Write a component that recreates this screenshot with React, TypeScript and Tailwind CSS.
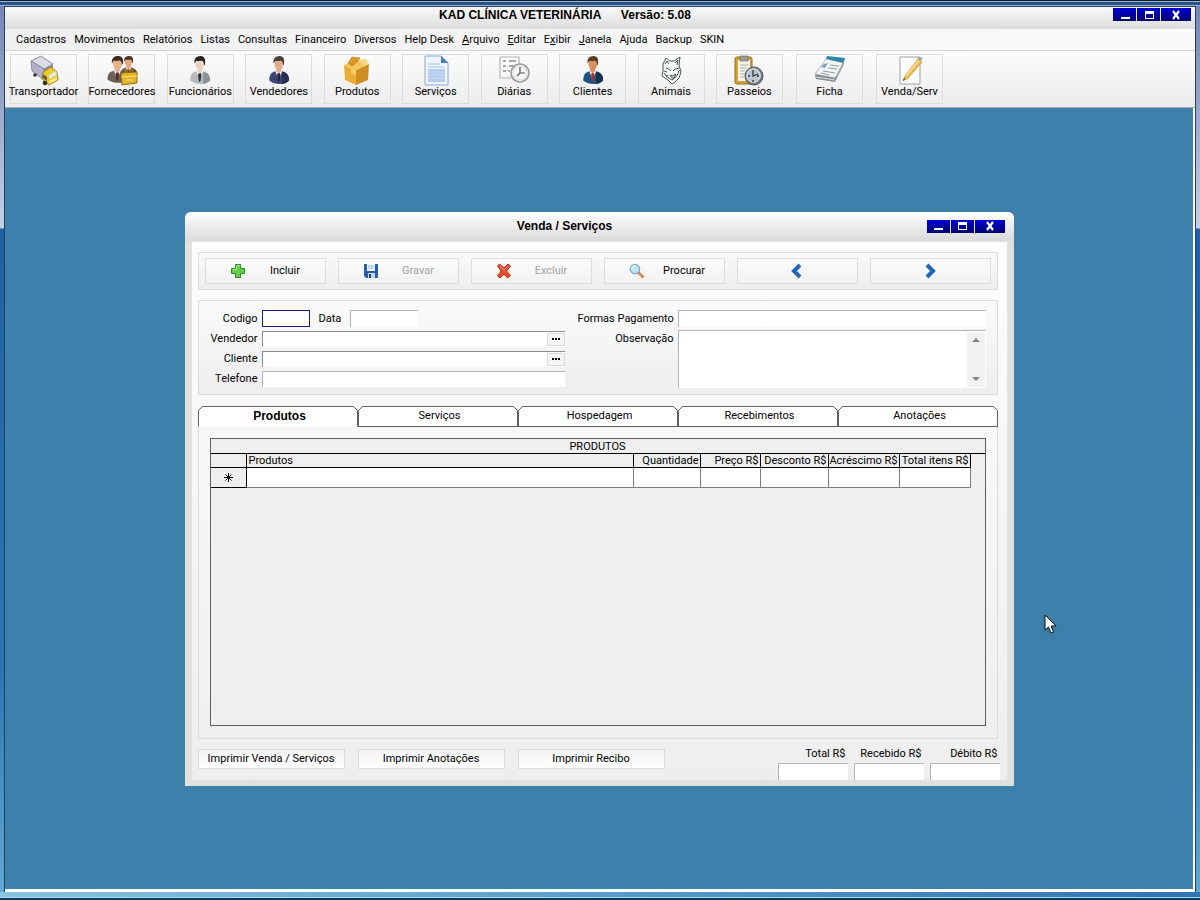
import type { ReactNode } from "react";

function Truck() {
  return (
    <svg viewBox="0 0 32 32" className="size-8">
      <path d="M3 6 13 1l12 8v11l-9 5L4 16z" fill="#8f8fa3" />
      <path d="M3 6 13 1l12 8-9 5z" fill="#dcdce8" stroke="#77778a" strokeWidth=".7" />
      <path d="M3 6 16 14v11L4 16z" fill="#b4b3cc" stroke="#77778a" strokeWidth=".7" />
      <path d="M15 17 23 12l6 5 1 8-9 5-7-6z" fill="#efc92c" stroke="#8b6d12" strokeWidth=".8" />
      <path d="m21 20 7-4 1 4-8 4z" fill="#d9ebf1" />
      <path d="m21 26 8-4v3l-8 4z" fill="#fbe878" />
      <circle cx="17" cy="28" r="2.3" fill="#333" />
      <circle cx="7" cy="20" r="1.8" fill="#333" />
      <path d="m15 19 4 3v4l-4-3z" fill="#5e5c49" />
    </svg>
  );
}

type PersonProps = { suit: string; dark: string; hair: string; skin: string; tie: string };

function PersonShape({ suit, dark, hair, skin, tie }: PersonProps) {
  return (
    <g>
      <path d="M5 26c0-7 3-9 8-10h6c6 1 9 4 9 10-4 5-17 5-23 0z" fill={suit} />
      <path d="M20 17c6 1 8 4 8 9-2 2-5 3-8 4z" fill={dark} />
      <path d="m12 16 4 10 4-10z" fill="#f5f5f5" />
      <path d="m15 18-1 2 1 8 2-2 1-6-1-2z" fill={tie} />
      <path d="M13 12h6v4l-3 3-3-3z" fill={skin} />
      <ellipse cx="16" cy="8.500" rx="5" ry="6.500" fill={skin} />
      <path d="M10 8c-1-5 2-8 7-8 5 0 6 4 5 9l-1 1c0-3-1-5-3-5-3 1-5 0-6 0z" fill={hair} />
    </g>
  );
}

function Person(props: PersonProps) {
  return (
    <svg viewBox="0 0 32 32" className="size-8">
      <g transform="translate(2 1) scale(.86 .94)">
        <PersonShape {...props} />
      </g>
    </svg>
  );
}

function Suppliers() {
  return (
    <svg viewBox="0 0 32 32" className="size-8">
      <g transform="translate(11 1) scale(.72)">
        <PersonShape suit="#6c6156" dark="#453e38" hair="#4a3326" skin="#e5a87b" tie="#8a3030" />
      </g>
      <g transform="translate(-3 1) scale(.9)">
        <PersonShape suit="#6c6156" dark="#453e38" hair="#3c2c24" skin="#eab187" tie="#5a2a2a" />
      </g>
      <path d="M20 18v-3h7v3" fill="none" stroke="#a3780d" strokeWidth="1.500" />
      <path d="m15 18 16-1v11l-15 2z" fill="#e3b628" stroke="#92700f" />
      <path d="m15 22 16-1M20 25h7" stroke="#fbe47c" strokeWidth="1.200" />
    </svg>
  );
}

function Box() {
  return (
    <svg viewBox="0 0 32 32" className="size-8">
      <path d="m3 10 12 5v15L4 25z" fill="#e8ae36" />
      <path d="m15 15 13-6-1 16-12 5z" fill="#cf8f20" />
      <path d="m3 10 12-6 13 5-13 6z" fill="#f2c65a" />
      <path d="m7 8 4-6 8 1-3 4-5 4z" fill="#d9992a" stroke="#b47a17" strokeWidth=".6" />
      <path d="m18 5 7-1 3 5-5 2z" fill="#f7d77b" />
      <path d="m10 13 5 2v6l-5-3z" fill="#f6cd63" />
    </svg>
  );
}

function DocumentIcon() {
  return (
    <svg viewBox="0 0 32 32" className="size-8">
      <path d="M5 1h16l7 7v22H5z" fill="#edf4fd" stroke="#8ba8d2" />
      <path d="M21 1v7h7z" fill="#477fbd" />
      <path d="M8 9h12M8 12h16" stroke="#a6bfe2" />
      <path d="M8 14h17v13H8z" fill="#b5cbed" />
      <path d="M8 17h17M8 20h17M8 23h17" stroke="#cbdcf5" />
    </svg>
  );
}

function Schedule() {
  return (
    <svg viewBox="0 0 32 32" className="size-8">
      <path d="M2 2h19v8M2 2v21h11" fill="none" stroke="#b3b3b3" strokeWidth="1.200" />
      <path d="M5 6h3m3 0h7M5 11h3m3 0h4M5 16h3m2 0h2" stroke="#8b8b8b" strokeWidth="1.600" />
      <circle cx="22" cy="18" r="9" fill="#f7f7f7" stroke="#999" strokeWidth="1.600" />
      <circle cx="22" cy="18" r="7" fill="none" stroke="#d5d5d5" />
      <path d="M22 12v6h5m-5 0-3 3" fill="none" stroke="#555" strokeWidth="1.200" />
    </svg>
  );
}

function Wolf() {
  return (
    <svg viewBox="0 0 32 32" className="size-8" fill="none" stroke="#36403e" strokeWidth=".9">
      <path d="m8 9 3-6 4 3h4l6-4-1 8 2 7-2 6-4 4-3 2-4-4-6-4 1-5z" fill="#f9fbfa" />
      <path d="m10 9 2-3 2 3m6-1 3-3-1 5" />
      <path d="m11 13 3 1 2 2m8-3-4 1-2 2M9 18l3 4 5 3 4-3 3-5" />
      <path d="m15 20 3 1 3-2-2 4h-2zM9 16l3 1m-1 4 2-1m12-5-2 2" />
    </svg>
  );
}

function ClipboardClock() {
  return (
    <svg viewBox="0 0 32 32" className="size-8">
      <rect x="2" y="2" width="17" height="27" rx="2" fill="#d3a035" stroke="#947027" />
      <path d="M5 5h12v21H5z" fill="#f8f6eb" />
      <path d="M7 1h8v5H7z" fill="#9c9c8e" stroke="#6d6b5d" strokeWidth=".7" />
      <path d="M7 10h8M7 13h7M7 16h5M7 19h5M7 22h4" stroke="#aaa" />
      <circle cx="21" cy="21" r="9" fill="#777e84" stroke="#4c5359" />
      <circle cx="20.500" cy="20.500" r="6.800" fill="#bac4cc" stroke="#e9eef1" />
      <path d="M20 15v6l5-2M15 21h2m7 0h2m-6 4v2" fill="none" stroke="#30383e" strokeWidth="1.300" />
    </svg>
  );
}

function Notepad() {
  return (
    <svg viewBox="0 0 32 32" className="size-8">
      <path d="m1 21 2-5 20 5 7-15v3l-9 18-19-3z" fill="#888d90" />
      <path d="m1 19 12-16 18 1-10 19z" fill="#f1f3f3" stroke="#999fa2" strokeWidth=".7" />
      <path d="m12 4 1-3 18 2-2 5z" fill="#2c86a6" />
      <path d="m10 9 4-1-3 5-4-1z" fill="#7aa6b4" />
      <path d="m16 10 9 1m-11 2 9 1M9 16l12 2M7 18l8 2" stroke="#969b9d" />
      <path d="m2 22 19 3" stroke="#ddd" />
    </svg>
  );
}

function PaperPencil() {
  return (
    <svg viewBox="0 0 32 32" className="size-8">
      <path d="M6 2h20v27H6z" fill="#fcfcfc" stroke="#a2a2a2" />
      <path d="M24 4 11 21l-2 5 5-3L28 7z" fill="#f0bd55" stroke="#c68f31" strokeWidth=".8" />
      <path d="M12 21 25 5" stroke="#ffe09b" strokeWidth="1.500" />
      <path d="m23 3 3 3 3-3-4-1z" fill="#98a0a6" />
      <path d="m9 26 1-3 1 1z" fill="#333" />
    </svg>
  );
}

const mainTools: { label: string; icon: ReactNode }[] = [
  { label: "Transportador", icon: <Truck /> },
  { label: "Fornecedores", icon: <Suppliers /> },
  { label: "Funcionários", icon: <Person suit="#b6bbc0" dark="#8c9298" hair="#252525" skin="#f0d2c1" tie="#333" /> },
  { label: "Vendedores", icon: <Person suit="#3e4372" dark="#292c52" hair="#4b3d39" skin="#e4ab8b" tie="#20233f" /> },
  { label: "Produtos", icon: <Box /> },
  { label: "Serviços", icon: <DocumentIcon /> },
  { label: "Diárias", icon: <Schedule /> },
  { label: "Clientes", icon: <Person suit="#1e5380" dark="#12304f" hair="#5b3e22" skin="#d99162" tie="#a32f2f" /> },
  { label: "Animais", icon: <Wolf /> },
  { label: "Passeios", icon: <ClipboardClock /> },
];
const extraTools: { label: string; icon: ReactNode }[] = [
  { label: "Ficha", icon: <Notepad /> },
  { label: "Venda/Serv", icon: <PaperPencil /> },
];

function ToolButton({ label, icon }: { label: string; icon: ReactNode }) {
  return (
    <button className="flex h-[50px] w-[67px] shrink-0 flex-col items-center border border-[#dcdcdc] whitespace-nowrap">
      {icon}
      <span className="-mt-0.5 leading-[14px]">{label}</span>
    </button>
  );
}

const menus: [string, string, string][] = [
  ["Cadastros", "", ""],
  ["Movimentos", "", ""],
  ["Relatórios", "", ""],
  ["Listas", "", ""],
  ["Consultas", "", ""],
  ["Financeiro", "", ""],
  ["Diversos", "", ""],
  ["Help Desk", "", ""],
  ["", "A", "rquivo"],
  ["", "E", "ditar"],
  ["E", "x", "ibir"],
  ["", "J", "anela"],
  ["A", "j", "uda"],
  ["Backup", "", ""],
  ["SKIN", "", ""],
];

function WindowControls() {
  const base = "flex h-[13px] items-center justify-center bg-linear-to-b from-[#0000d8] to-[#000070]";
  return (
    <div className="flex gap-px">
      <button aria-label="Minimizar" className={`${base} w-[23px]`}>
        <svg viewBox="0 0 10 10" className="size-2.5"><path d="M1 7h9v2H1z" fill="#fff" /></svg>
      </button>
      <button aria-label="Maximizar" className={`${base} w-[23px]`}>
        <svg viewBox="0 0 10 10" className="size-2.5"><path d="M1 1h9v8H1zM2 4v4h7V4z" fill="#fff" fillRule="evenodd" /></svg>
      </button>
      <button aria-label="Fechar" className={`${base} w-[30px]`}>
        <svg viewBox="0 0 10 10" className="size-2.5"><path d="m2 1 6 8M8 1 2 9" stroke="#fff" strokeWidth="2.200" /></svg>
      </button>
    </div>
  );
}

function ActionButton({ icon, label, disabled }: { icon: ReactNode; label: string; disabled?: boolean }) {
  return (
    <button
      disabled={disabled}
      className="flex h-[26px] items-center border border-[#dedede] bg-linear-to-b from-[#fcfcfc] to-[#f1f1f1] pl-6 disabled:text-[#a3a3a3]"
    >
      {icon}
      <span className="flex-1 text-center">{label}</span>
    </button>
  );
}

function ArrowButton({ label, d }: { label: string; d: string }) {
  return (
    <button
      aria-label={label}
      className="flex h-[26px] items-center justify-center border border-[#dedede] bg-linear-to-b from-[#fcfcfc] to-[#f1f1f1]"
    >
      <svg viewBox="0 0 16 16" className="size-4">
        <path d={d} fill="none" stroke="#1f68b5" strokeWidth="4" />
      </svg>
    </button>
  );
}

const PlusIcon = (
  <svg viewBox="0 0 16 16" className="size-4">
    <path d="M5.500 1.500h5v4h4v5h-4v4h-5v-4h-4v-5h4z" fill="#63cf45" stroke="#2c8a22" />
    <path d="M6.500 3v3.500H3M7 2.500h2.500" fill="none" stroke="#b4f09c" />
  </svg>
);
const SaveIcon = (
  <svg viewBox="0 0 16 16" className="size-4">
    <path d="M1 1h14v14H3l-2-2z" fill="#2560a8" />
    <path d="M4 1h8v7H4z" fill="#f0f6fd" />
    <path d="M5 3h6M5 5h6" stroke="#9cb9db" />
    <path d="M5 10h7v5H5z" fill="#c6d5e6" />
    <path d="M6 11h2v4H6z" fill="#1d4377" />
  </svg>
);
const DeleteIcon = (
  <svg viewBox="0 0 16 16" className="size-4">
    <path d="m1.500 3 2-2L8 5l4-4 2.500 2-4 5 4 4.500-3 2.500L8 11l-4 4-2.500-2L5 8z" fill="#e9512d" stroke="#b42d17" />
    <path d="m4 3 4 4 4-4" fill="none" stroke="#f79272" />
  </svg>
);
const SearchIcon = (
  <svg viewBox="0 0 16 16" className="size-4">
    <path d="m9 9 5.500 5.500" stroke="#c98b4f" strokeWidth="2.600" />
    <circle cx="6" cy="6" r="4.700" fill="#bfe3f6" stroke="#7ea6c2" strokeWidth="1.200" />
    <path d="M3 6c0-2 1-3 3-3" fill="none" stroke="#fff" />
  </svg>
);

const panel = "border border-[#dcdcdc] bg-linear-to-b from-[#fafafa] to-[#eeeeee]";
const field = "border-t border-l border-[#b4b4b4] bg-white outline-none";

function LookupField({ id, label }: { id: string; label: string }) {
  return (
    <>
      <label htmlFor={id} className="text-right">{label}</label>
      <div className="flex h-4 items-center border-t border-l border-[#8e8e8e] bg-white">
        <input id={id} className="h-full min-w-0 flex-1 outline-none" />
        <button
          aria-label={`Procurar ${label}`}
          className="flex h-[13px] w-[18px] items-center justify-center border border-[#dcdcdc] bg-[#f4f4f4]"
        >
          <svg viewBox="0 0 8 2" className="h-0.5 w-2"><path d="M0 0h2v2H0zM3 0h2v2H3zM6 0h2v2H6z" /></svg>
        </button>
      </div>
    </>
  );
}

const tabs = ["Produtos", "Serviços", "Hospedagem", "Recebimentos", "Anotações"];

function Tab({ label, active }: { label: string; active: boolean }) {
  return (
    <button role="tab" aria-selected={active} className="grid h-[21px] flex-1">
      <svg viewBox="0 0 160 21" preserveAspectRatio="none" className="col-start-1 row-start-1 h-[21px] w-full">
        <path d="M.5 20.500V4.500l4-4h151l4 4v16" fill="#fff" stroke="#606060" />
        {!active && <path d="M0 20.500h160" stroke="#606060" />}
      </svg>
      <span className={`col-start-1 row-start-1 self-center pl-1 ${active ? "font-['Liberation_Sans',sans-serif] text-[12px] font-bold" : ""}`}>
        {label}
      </span>
    </button>
  );
}

const columns = ["Quantidade", "Preço R$", "Desconto R$", "Acréscimo R$", "Total itens R$"];
const cell = "border-r border-b border-[#7d7d7d] bg-white";
const head = "border-r border-b border-black p-0 font-normal whitespace-nowrap";

function ProductTable() {
  return (
    <div className="h-[288px] border border-[#606060] bg-[#efefef]">
      <table className="w-full table-fixed border-separate border-spacing-0 leading-[13px]">
        <caption className="h-[15px] border-b border-black leading-[15px]">PRODUTOS</caption>
        <colgroup>
          <col className="w-9" />
          <col />
          <col className="w-[67px]" />
          <col className="w-[60px]" />
          <col className="w-[68px]" />
          <col className="w-[71px]" />
          <col className="w-[71px]" />
          <col className="w-3.5" />
        </colgroup>
        <thead>
          <tr className="h-3.5">
            <th className={head} />
            <th className={`${head} pl-0.5 text-left`}>Produtos</th>
            {columns.map((c) => (
              <th key={c} className={`${head} pr-px text-right`}>{c}</th>
            ))}
            <td />
          </tr>
        </thead>
        <tbody>
          <tr className="h-5">
            <td className="border-r border-b border-black p-0">
              <svg viewBox="0 0 9 9" className="mx-auto size-[9px]">
                <path d="M4.500 0v9M0 4.500h9M1.500 1.500l6 6M7.500 1.500l-6 6" stroke="#000" />
              </svg>
            </td>
            <td className={cell} />
            {columns.map((c) => (
              <td key={c} className={cell} />
            ))}
            <td />
          </tr>
        </tbody>
      </table>
    </div>
  );
}

function SaleWindow() {
  return (
    <section className="flex w-[829px] max-w-full flex-col overflow-hidden rounded-t-md bg-[#e0e0de]">
      <header className="flex h-[29px] items-center bg-linear-to-b from-white to-[#dadada] pr-[9px] pl-[18px]">
        <h2 className="flex-1 text-center font-['Liberation_Sans',sans-serif] text-[12px] font-bold">Venda / Serviços</h2>
        <WindowControls />
      </header>
      <div className="mx-1.5 mb-[5px] flex flex-col border border-[#e6e2dc] bg-linear-to-b from-[#fdfdfd] to-[#eeeeee] pt-2.5 pr-[9px] pl-1.5">
        <div className={`grid h-[38px] grid-cols-6 items-center gap-3 px-1.5 ${panel}`}>
          <ActionButton icon={PlusIcon} label="Incluir" />
          <ActionButton icon={SaveIcon} label="Gravar" disabled />
          <ActionButton icon={DeleteIcon} label="Excluir" disabled />
          <ActionButton icon={SearchIcon} label="Procurar" />
          <ArrowButton label="Anterior" d="m11 2-6 6 6 6" />
          <ArrowButton label="Próximo" d="m5 2 6 6-6 6" />
        </div>

        <form className={`mt-2.5 flex h-[95px] justify-between pt-2 pr-[11px] ${panel}`}>
          <div className="grid w-[366px] auto-rows-[20px] grid-cols-[59px_1fr] items-center gap-x-1 whitespace-nowrap">
            <label htmlFor="codigo" className="text-right">Codigo</label>
            <div className="flex items-center">
              <input id="codigo" autoFocus className="h-[17px] w-12 border border-[#1c1c80] bg-white outline-none" />
              <label htmlFor="data" className="ml-[9px] w-6">Data</label>
              <input id="data" className={`ml-[7px] h-[17px] w-[68px] ${field}`} />
            </div>
            <LookupField id="vendedor" label="Vendedor" />
            <LookupField id="cliente" label="Cliente" />
            <label htmlFor="telefone" className="text-right">Telefone</label>
            <input id="telefone" className={`h-4 ${field}`} />
          </div>
          <div className="grid w-[408px] auto-rows-[20px] grid-cols-[96px_1fr] gap-x-1 whitespace-nowrap">
            <label htmlFor="formas" className="self-center text-right">Formas Pagamento</label>
            <input id="formas" className={`h-[17px] self-center ${field}`} />
            <label htmlFor="observacao" className="self-center text-right">Observação</label>
            <div className={`row-span-3 my-px flex ${field}`}>
              <textarea id="observacao" className="min-w-0 flex-1 resize-none outline-none" />
              <div className="m-px flex w-[18px] flex-col items-center justify-between bg-[#f1f1f1] py-1.5">
                <svg viewBox="0 0 8 4" className="h-1 w-2"><path d="M0 4 4 0l4 4z" fill="#858585" /></svg>
                <svg viewBox="0 0 8 4" className="h-1 w-2"><path d="m0 0 4 4 4-4z" fill="#858585" /></svg>
              </div>
            </div>
          </div>
        </form>

        <div role="tablist" className="mt-[11px] flex">
          {tabs.map((t, i) => (
            <Tab key={t} label={t} active={i === 0} />
          ))}
        </div>
        <div className="border-x border-b border-[#dcdcdc] px-[11px] pt-[11px] pb-3">
          <ProductTable />
        </div>

        <footer className="flex h-[41px] items-end justify-between">
          <div className="flex gap-[13px] self-center">
            {["Imprimir Venda / Serviços", "Imprimir Anotações", "Imprimir Recibo"].map((t) => (
              <button key={t} className="h-5 w-[147px] border border-[#dcdcdc] bg-linear-to-b from-[#f4f4f4] to-[#fdfdfd] leading-4 whitespace-nowrap">
                {t}
              </button>
            ))}
          </div>
          <div className="-mr-0.5 flex gap-1.5">
            {["Total R$", "Recebido R$", "Débito R$"].map((t) => (
              <label key={t} className="flex w-[70px] flex-col">
                <span className="pr-0.5 text-right leading-[18px] whitespace-nowrap">{t}</span>
                <input className={`h-[17px] w-full ${field}`} />
              </label>
            ))}
          </div>
        </footer>
      </div>
    </section>
  );
}

export default function App() {
  return (
    <div className="flex min-h-screen w-full flex-col border-t border-b-2 border-t-[#0c2038] border-b-[#0d3a5c] bg-[linear-gradient(to_bottom,#7384b2_0,#c2d0e8_227px,#1f60a6_228px,#2f74b2_75%,#63a9d4_100%)] font-['Roboto',sans-serif] text-[11px] leading-4 text-black">
      <div className="h-[5px] border-y border-[#9cb4d2] bg-[#2b5288]" />
      <div className="mx-1 flex flex-1 flex-col border-x border-t border-[#23405f] bg-white">
        <header className="flex h-[22px] items-start bg-linear-to-b from-[#fafafa] to-[#dcdcdc] pt-px pr-1 pl-3">
          <h1 className="flex-1 text-center font-['Liberation_Sans',sans-serif] text-[12px] leading-[14px] font-bold whitespace-pre">
            {"KAD CLÍNICA VETERINÁRIA      Versão: 5.08"}
          </h1>
          <WindowControls />
        </header>
        <nav className="flex h-[22px] items-center gap-2 border-b border-[#d4d4d4] bg-linear-to-r from-[#f0f0f0] to-[#fafafa] pl-[11px] whitespace-nowrap">
          {menus.map(([before, key, after]) => (
            <a key={before + key + after} href="#">
              {before}
              <span className="underline">{key}</span>
              {after}
            </a>
          ))}
        </nav>
        <div className="flex h-[57px] items-start gap-[13px] border-b border-[#a9a9b4] bg-linear-to-b from-[#fcfcfc] to-[#ececec] pt-[3px] pl-[5px]">
          <div className="flex w-[773px] justify-between">
            {mainTools.map((t) => (
              <ToolButton key={t.label} {...t} />
            ))}
          </div>
          {extraTools.map((t) => (
            <ToolButton key={t.label} {...t} />
          ))}
        </div>
        <main className="relative mr-0.5 mb-[3px] flex flex-1 items-center justify-center bg-[#3d80ab]">
          <SaleWindow />
          <svg viewBox="0 0 14 20" className="absolute top-[506px] left-[1039px] h-5 w-3.5 drop-shadow-sm">
            <path d="M1 1v15l3.500-3 2.500 6 2.500-1L7 12h5z" fill="#fff" stroke="#111" />
          </svg>
        </main>
      </div>
      <div className="h-1.5 border-b border-[#a8dcf0] bg-linear-to-r from-[#86c3df] to-[#2d74b4]" />
    </div>
  );
}
